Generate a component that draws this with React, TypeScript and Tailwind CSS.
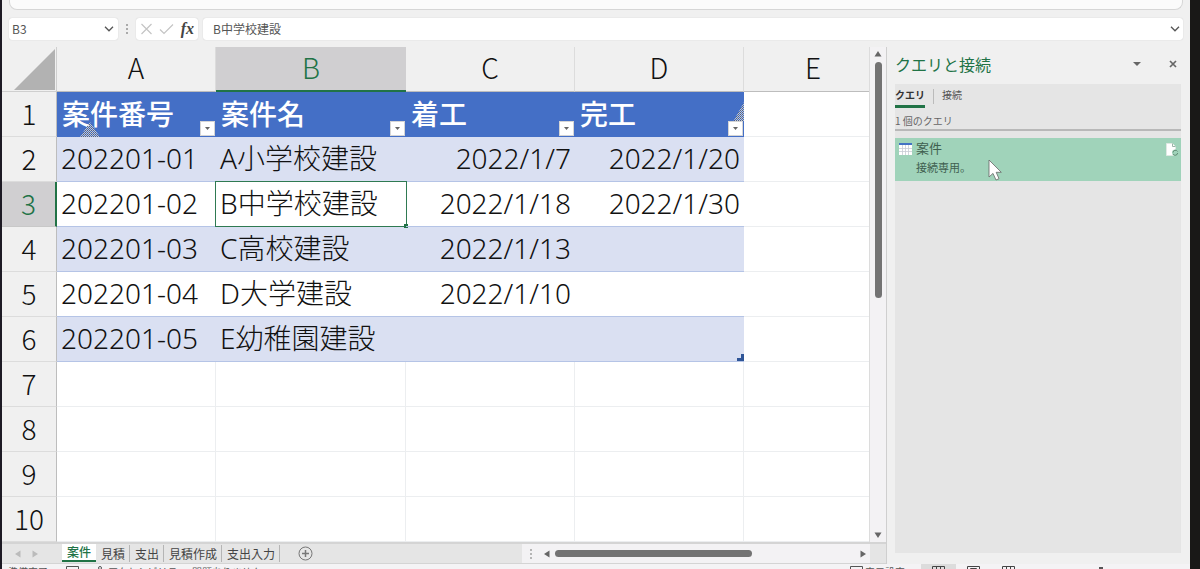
import { useState } from "react";

const columns = ["A", "B", "C", "D", "E"];

const headers = ["案件番号", "案件名", "着工", "完工"];

const rows = [
    ["202201-01", "A小学校建設", "2022/1/7", "2022/1/20"],
    ["202201-02", "B中学校建設", "2022/1/18", "2022/1/30"],
    ["202201-03", "C高校建設", "2022/1/13", ""],
    ["202201-04", "D大学建設", "2022/1/10", ""],
    ["202201-05", "E幼稚園建設", "", ""],
];

const emptyRows = [7, 8, 9, 10];

const sheets = ["案件", "見積", "支出", "見積作成", "支出入力"];

function Chevron() {
    return (
        <svg width="10" height="6" viewBox="0 0 10 6" fill="none" stroke="#555" strokeWidth="1.3">
            <path d="M1 .8 5 4.8 9 .8" />
        </svg>
    );
}

function Arrow({ d, color = "#666" }: { d: string; color?: string }) {
    return (
        <svg width="8" height="8" viewBox="0 0 8 8" fill={color}>
            <path d={d} />
        </svg>
    );
}

const UP = "M4 1 7.5 6.5h-7z";
const DOWN = "M4 7 .5 1.5h7z";
const LEFT = "M1 4 6.5 .5v7z";
const RIGHT = "M7 4 1.5 .5v7z";

function FormulaBar() {
    const [cell, setCell] = useState("B3");
    const [formula, setFormula] = useState("B中学校建設");

    return (
        <div className="flex shrink-0 items-center pt-2 pb-[7px] pl-[7px] pr-[7px]">
            <div className="flex h-[22px] w-[109px] items-center rounded-[3px] bg-white pr-1 shadow-[0_0_1px_#bbb]">
                <input
                    aria-label="名前ボックス"
                    value={cell}
                    onChange={(e) => setCell(e.target.value)}
                    className="w-full min-w-0 bg-transparent pl-[3px] text-xs text-[#555] outline-none"
                />
                <button aria-label="名前の一覧"><Chevron /></button>
            </div>
            <div className="flex w-[18px] flex-col items-center gap-[2px]">
                <span className="size-[2px] bg-[#aaa]"></span>
                <span className="size-[2px] bg-[#aaa]"></span>
                <span className="size-[2px] bg-[#aaa]"></span>
            </div>
            <div className="flex h-[22px] w-[62px] items-center justify-between rounded-[3px] bg-white px-1 shadow-[0_0_1px_#bbb]">
                <button aria-label="キャンセル">
                    <svg width="13" height="12" viewBox="0 0 13 12" stroke="#c4c4c4" strokeWidth="1.2">
                        <path d="M1.5 1 11.5 11M11.5 1 1.5 11" />
                    </svg>
                </button>
                <button aria-label="入力">
                    <svg width="15" height="12" viewBox="0 0 15 12" fill="none" stroke="#c4c4c4" strokeWidth="1.2">
                        <path d="M1 6.5 5 10.5 14 1.5" />
                    </svg>
                </button>
                <button className="font-['Liberation_Serif',serif] text-base leading-none font-bold text-[#444] italic">
                    fx
                </button>
            </div>
            <div className="ml-[5px] flex h-[22px] flex-1 items-center rounded-[3px] bg-white pr-[3px] shadow-[0_0_1px_#bbb]">
                <input
                    aria-label="数式バー"
                    value={formula}
                    onChange={(e) => setFormula(e.target.value)}
                    className="w-full min-w-0 bg-transparent pl-[10px] text-xs text-[#555] outline-none"
                />
                <button aria-label="数式バーの展開"><Chevron /></button>
            </div>
        </div>
    );
}

function RowHeader({ n, selected = false }: { n: number; selected?: boolean }) {
    return (
        <th
            scope="row"
            className={
                selected
                    ? "border-r-2 border-b border-r-[#217346] border-b-[#c8c8c8] bg-[#d0cfd1] p-0 pb-[3px] font-light text-[#217346]"
                    : "border-r border-b border-r-[#bdbdbd] border-b-[#dcdcdc] bg-[#f0f0f0] p-0 pb-[3px] font-light"
            }
        >
            {n}
        </th>
    );
}

function FilterButton({ name }: { name: string }) {
    return (
        <button
            aria-label={name + "のフィルター"}
            className="absolute right-px bottom-px flex size-[15px] items-center justify-center border border-[#d5d5d5] bg-white"
        >
            <svg width="5" height="3" viewBox="0 0 5 3" fill="#666">
                <path d="M0 0h5L2.5 3z" />
            </svg>
        </button>
    );
}

function Grid() {
    return (
        <div className="min-w-0 flex-1 overflow-hidden border-r border-[#dcdcdc] bg-white">
            <table className="w-full min-w-[881px] table-fixed border-separate border-spacing-0 text-[28px] leading-none font-light text-[#111]">
                <colgroup>
                    <col className="w-[55px]" />
                    <col className="w-[159px]" />
                    <col className="w-[190px]" />
                    <col className="w-[169px]" />
                    <col className="w-[169px]" />
                    <col />
                </colgroup>
                <thead>
                    <tr className="h-[45px]">
                        <th className="border-r border-b border-[#cfcfcf] bg-[#f0f0f0] p-0 pr-px align-bottom">
                            <svg className="ml-auto" width="41" height="42" viewBox="0 0 41 42" fill="#b2b2b2">
                                <path d="M41 0V41H0z" />
                            </svg>
                        </th>
                        {columns.map((c) => (
                            <th
                                key={c}
                                scope="col"
                                className={
                                    c === "B"
                                        ? "border-b-2 border-[#217346] bg-[#d0cfd1] p-0 pb-[3px] font-light text-[#217346]"
                                        : "border-r border-b border-r-[#dcdcdc] border-b-[#bdbdbd] bg-[#f0f0f0] p-0 pb-1 font-light"
                                }
                            >
                                {c}
                            </th>
                        ))}
                    </tr>
                </thead>
                <tbody>
                    <tr className="h-[45px]">
                        <RowHeader n={1} />
                        {headers.map((h, i) => (
                            <td key={h} className="relative bg-[#446fc6] p-0 pb-1 pl-[5px] font-medium text-white">
                                {h}
                                {i === 0 && (
                                    <svg className="absolute bottom-0 left-[23px]" width="20" height="15" viewBox="0 0 20 15">
                                        <Dither />
                                        <path d="M10 0 20 15H0z" fill="url(#dither)" />
                                    </svg>
                                )}
                                {i === 3 && (
                                    <svg className="absolute right-0 bottom-[15px]" width="11" height="20" viewBox="0 0 11 20">
                                        <path d="M11 0V20H0z" fill="url(#dither)" />
                                    </svg>
                                )}
                                <FilterButton name={h} />
                            </td>
                        ))}
                        <td className="border-r border-b border-[#eceef0] p-0"></td>
                    </tr>
                    {rows.map((row, r) => (
                        <tr key={row[0]} className={r % 2 === 0 ? "h-[45px] bg-[#dae0f2]" : "h-[45px] bg-white"}>
                            <RowHeader n={r + 2} selected={r === 1} />
                            {row.map((value, c) => (
                                <td
                                    key={c}
                                    className={
                                        c < 2
                                            ? "relative border-b border-[#b5c4e6] p-0 pb-[3px] pl-1 font-['Noto_Sans','Noto_Sans_CJK_JP',sans-serif] whitespace-nowrap"
                                            : "relative border-b border-[#b5c4e6] p-0 pr-1 pb-[3px] text-right font-['Noto_Sans','Noto_Sans_CJK_JP',sans-serif] whitespace-nowrap"
                                    }
                                >
                                    {value}
                                    {r === 1 && c === 1 && (
                                        <span className="absolute -inset-px border border-[#2f7a52]">
                                            <span className="absolute -right-[2px] -bottom-[2px] size-1 bg-[#217346]"></span>
                                        </span>
                                    )}
                                    {r === 4 && c === 3 && (
                                        <svg className="absolute right-0 bottom-0" width="7" height="7" viewBox="0 0 7 7" fill="#2f5597">
                                            <path d="M7 0V7H0V4H4V0z" />
                                        </svg>
                                    )}
                                </td>
                            ))}
                            <td className="border-r border-b border-[#eceef0] bg-white p-0"></td>
                        </tr>
                    ))}
                    {emptyRows.map((n) => (
                        <tr key={n} className="h-[45px]">
                            <RowHeader n={n} />
                            {columns.map((c) => (
                                <td key={c} className="border-r border-b border-[#eceef0] p-0"></td>
                            ))}
                        </tr>
                    ))}
                </tbody>
            </table>
        </div>
    );
}

function Dither() {
    return (
        <defs>
            <pattern id="dither" width="2" height="2" patternUnits="userSpaceOnUse">
                <rect width="1" height="1" fill="#c3c7cf" />
                <rect x="1" y="1" width="1" height="1" fill="#c3c7cf" />
                <rect x="1" width="1" height="1" fill="#4a5f8c" />
            </pattern>
        </defs>
    );
}

function SheetTabs() {
    const [active, setActive] = useState("案件");

    return (
        <div className="flex h-[22px] shrink-0 items-stretch border-t-2 border-b border-[#d4d4d4] bg-[#e5e5e5]">
            <div className="flex w-[60px] items-center gap-[9px] pl-3">
                <button aria-label="前のシート"><Arrow d={LEFT} color="#bbb" /></button>
                <button aria-label="次のシート"><Arrow d={RIGHT} color="#bbb" /></button>
            </div>
            {sheets.map((s) => (
                <button
                    key={s}
                    onClick={() => setActive(s)}
                    className={
                        s === active
                            ? "mb-px border-b-2 border-[#217346] bg-white px-[5px] text-xs leading-none font-medium text-[#217346]"
                            : "my-px border-r border-[#b5b5b5] pr-1 pl-[5px] text-xs leading-none text-[#444]"
                    }
                >
                    {s}
                </button>
            ))}
            <button aria-label="新しいシート" className="ml-[18px]">
                <svg width="15" height="15" viewBox="0 0 15 15" fill="none" stroke="#777">
                    <circle cx="7.5" cy="7.5" r="6.5" />
                    <path d="M7.5 4v7M4 7.5h7" strokeWidth="1.5" />
                </svg>
            </button>
            <div className="ml-auto flex w-[348px] items-center bg-[#f3f2f4] pr-[3px] pl-2">
                <div className="flex w-[13px] flex-col gap-[2px]">
                    <span className="size-[2px] bg-[#b5b5b5]"></span>
                    <span className="size-[2px] bg-[#b5b5b5]"></span>
                    <span className="size-[2px] bg-[#b5b5b5]"></span>
                </div>
                <button aria-label="左へスクロール"><Arrow d={LEFT} /></button>
                <div className="mx-1 flex-1">
                    <div className="h-[7px] w-[197px] rounded-full bg-[#737373]"></div>
                </div>
                <button aria-label="右へスクロール"><Arrow d={RIGHT} /></button>
            </div>
            <div className="w-4"></div>
        </div>
    );
}

function QueryPane() {
    return (
        <aside className="flex w-[304px] shrink-0 flex-col border-l border-[#cfcfcf] pr-[9px] pb-[11px] pl-2">
            <div className="flex h-[37px] items-center pr-1">
                <h2 className="flex-1 pb-1 text-base leading-none text-[#217346]">クエリと接続</h2>
                <button aria-label="作業ウィンドウのオプション" className="mr-7 pb-1">
                    <svg width="8" height="4" viewBox="0 0 8 4" fill="#666">
                        <path d="M0 0h8L4 4z" />
                    </svg>
                </button>
                <button aria-label="閉じる" className="pb-1">
                    <svg width="8" height="8" viewBox="0 0 8 8" stroke="#666" strokeWidth="1.7">
                        <path d="M1 1 7 7M7 1 1 7" />
                    </svg>
                </button>
            </div>
            <div className="flex-1 bg-[#e5e5e5]">
                <div className="flex h-6 items-stretch text-[10px] leading-none text-[#555]">
                    <button className="border-b-[3px] border-[#217346] font-bold text-[#333]">クエリ</button>
                    <span className="mx-2 mt-[5px] mb-1 w-px bg-[#bbb]"></span>
                    <button className="pb-[3px]">接続</button>
                </div>
                <p className="flex h-[23px] items-center border-b-2 border-[#b8b8b8] pt-1 text-[10px] leading-none text-[#666]">
                    1 個のクエリ
                </p>
                <button className="relative mt-[7px] flex w-full gap-1 bg-[#a0d3ba] pt-[3px] pb-[7px] pl-1 text-left text-[#3f5f50]">
                    <svg className="mt-[2px]" width="13" height="12" viewBox="0 0 13 12">
                        <path d="M0 0h13v12H0z" fill="#fff" />
                        <path d="M0 0h13v2H0z" fill="#4472c4" />
                        <path d="M0 5.500h13M0 8.500h13M3.500 2v10M6.500 2v10M9.500 2v10" stroke="#c9ccd4" strokeWidth=".8" />
                    </svg>
                    <span>
                        <span className="block text-[13px] leading-[13px]">案件</span>
                        <span className="mt-[7px] block text-[11px] leading-[13px]">接続専用。</span>
                    </span>
                    <svg className="absolute top-[5px] right-[2px]" width="13" height="13" viewBox="0 0 13 13" fill="none">
                        <path d="M.5.5h6l3 3v9h-9z" fill="#fff" stroke="#dfe8e3" />
                        <path d="M6.5.5v3h3" stroke="#9ab5a7" />
                        <circle cx="9.3" cy="9.8" r="3.2" fill="#a0d3ba" />
                        <path d="M7 9.5a2.4 2.4 0 0 1 4.5-1M11.6 10a2.4 2.4 0 0 1-4.5 1" stroke="#5d8a72" />
                    </svg>
                    <svg className="absolute top-[21px] left-[93px]" width="14" height="23" viewBox="0 0 14 23">
                        <path d="M1 1V18l4-3.600L8 21l3-1.300L8.200 13.300H13.300z" fill="#fff" stroke="#666" strokeWidth=".8" />
                    </svg>
                </button>
            </div>
        </aside>
    );
}

function StatusBar() {
    return (
        <footer className="flex h-6 shrink-0 items-start bg-[#f4f3f5] pr-2 pl-[6px] text-[10px] leading-none text-[#555]">
            <span className="pt-[3px]">準備完了</span>
            <svg className="mt-[2px] ml-[18px]" width="13" height="12" viewBox="0 0 13 12" fill="none" stroke="#555">
                <path d="M.5.5h12v11H.5z" />
            </svg>
            <svg className="mt-[2px] ml-[15px]" width="12" height="13" viewBox="0 0 12 13" fill="none" stroke="#555">
                <circle cx="6" cy="2" r="1.5" />
                <path d="M1 3.500 4 5h4l3-1.500M4 5v3l-1 4M8 5v3l1 4" />
            </svg>
            <span className="pt-[3px] pl-[2px]">アクセシビリティ: 問題ありません</span>
            <span className="ml-auto flex gap-[2px] pt-[2px]">
                <svg width="13" height="12" viewBox="0 0 13 12" fill="none" stroke="#555">
                    <path d="M.5.5h12v8H.5zM4 11.500h5" />
                </svg>
                <span className="pt-px">表示設定</span>
            </span>
            <button aria-label="標準" className="ml-[16px] flex h-full w-[35px] justify-center bg-[#dcdcdc] pt-[2px]">
                <svg width="13" height="13" viewBox="0 0 13 13" fill="none" stroke="#444">
                    <path d="M.5.5h12v12H.5zM.5 4.500h12M.5 8.500h12M4.500.5v12M8.500.5v12" />
                </svg>
            </button>
            <button aria-label="ページ レイアウト" className="flex w-[35px] justify-center pt-[2px]">
                <svg width="13" height="13" viewBox="0 0 13 13" fill="none" stroke="#444">
                    <path d="M.5.5h12v12H.5zM3.500 2.500h6v8h-6z" />
                </svg>
            </button>
            <button aria-label="改ページ プレビュー" className="flex w-[35px] justify-center pt-[2px]">
                <svg width="13" height="13" viewBox="0 0 13 13" fill="none" stroke="#444">
                    <path d="M.5.5h12v12H.5zM4.500.5v6M8.500.5v6M.5 6.500h12" />
                </svg>
            </button>
            <span className="mr-12 ml-[73px] mt-[3px] h-3 w-1 bg-[#555]"></span>
            <span className="pt-[3px] text-xs leading-none">200%</span>
        </footer>
    );
}

export default function App() {
    return (
        <div className="h-screen overflow-hidden border-r-[10px] border-l-2 border-r-[#191817] border-l-[#1d1a24] bg-[#f0f0f0] font-['Noto_Sans_CJK_JP',sans-serif]">
            <div className="flex min-h-full flex-col">
                <div className="mx-[7px] h-[10px] shrink-0 rounded-b-lg border border-t-0 border-[#d6d6d6] bg-[#fbfbfb]"></div>
                <FormulaBar />
                <div className="flex grow">
                    <div className="flex min-w-0 flex-1 flex-col">
                        <div className="flex grow">
                            <Grid />
                            <div className="flex w-4 shrink-0 flex-col items-center bg-[#f3f2f4] py-[3px]">
                                <button aria-label="上へスクロール"><Arrow d={UP} /></button>
                                <div className="my-1 flex-1">
                                    <div className="h-[236px] w-[7px] rounded-full bg-[#737373]"></div>
                                </div>
                                <button aria-label="下へスクロール"><Arrow d={DOWN} /></button>
                            </div>
                        </div>
                        <SheetTabs />
                    </div>
                    <QueryPane />
                </div>
                <StatusBar />
            </div>
        </div>
    );
}
